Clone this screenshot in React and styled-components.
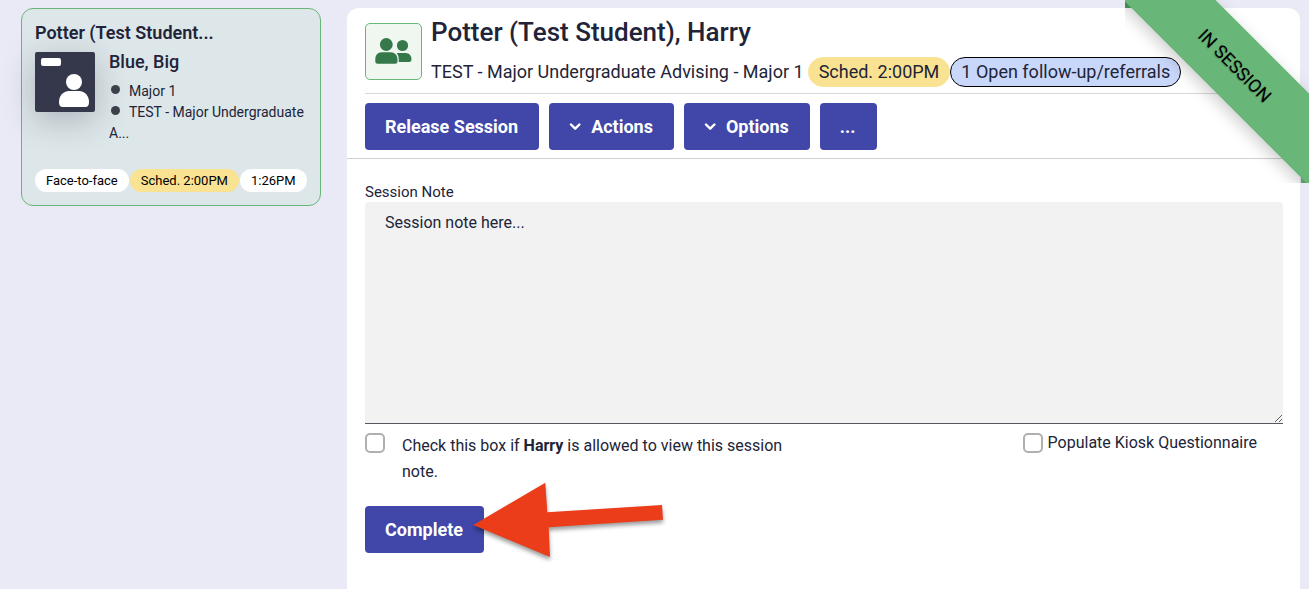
import React, { useState } from 'react';
import styled, { createGlobalStyle } from 'styled-components';

const theme = {
    text: '#212438',
    back: '#eaeaf6',
    primary: '#4047a8',
    green: '#69b778',
    greenDark: '#51a163',
    yellow: '#f9e292',
    line: '#d0d0d0',
};

const GlobalStyle = createGlobalStyle`
    * {
        box-sizing: border-box;
    }

    body {
        margin: 0;
        background-color: ${theme.back};
        color: ${theme.text};
        font-family: Roboto, "Liberation Sans", sans-serif;
        font-size: 16px;
    }

    h1, h2, h3, p, ul {
        margin: 0;
        padding: 0;
    }
`;

const Page = styled.div`
    position: relative;
    display: flex;
    align-items: stretch;
    gap: 26px;
    min-height: 100vh;
    padding: 8px 9px 0 21px;
    overflow: hidden;
`;

const Sidebar = styled.aside`
    flex: 0 0 300px;
`;

const Card = styled.article`
    padding: 12px 12px 13px 13px;
    border: 1px solid ${theme.green};
    border-radius: 12px;
    background-color: #dde6e9;
`;

const CardTitle = styled.h2`
    font-size: 18px;
    line-height: 24px;
    font-weight: 600;
`;

const CardBody = styled.div`
    display: flex;
    gap: 14px;
    padding-top: 7px;
`;

const Avatar = styled.svg`
    flex: none;
    width: 60px;
    height: 60px;
    border-radius: 2px;
    box-shadow: 0 8px 32px rgba(33, 36, 56, 0.25);
`;

const Advisor = styled.h3`
    font-size: 18px;
    line-height: 20px;
    font-weight: 500;
`;

const Reasons = styled.ul`
    height: 97px;
    padding-top: 9px;
    list-style: none;
    font-size: 14px;
    line-height: 21px;
`;

const Reason = styled.li`
    &::before {
        content: '';
        display: inline-block;
        width: 9px;
        height: 9px;
        margin: 0 9px 2px 2px;
        border-radius: 50%;
        background-color: #3d404b;
    }
`;

const Tags = styled.div`
    display: flex;
    gap: 1px;
`;

const Tag = styled.span`
    padding: 0 11px;
    border-radius: 12px;
    background-color: ${props => props.$color || '#fff'};
    color: #000;
    font-size: 13px;
    line-height: 23px;
    white-space: nowrap;
`;

const Main = styled.main`
    flex: 1;
    min-width: 0;
    border-radius: 12px 12px 0 0;
    background-color: #fff;
`;

const Header = styled.header`
    padding: 8px 18px;
    border-bottom: 1px solid ${theme.line};
`;

const Student = styled.div`
    display: flex;
    gap: 9px;
    padding-bottom: 6px;
    border-bottom: 1px solid #d8d8d8;
`;

const GroupBox = styled.div`
    flex: none;
    display: flex;
    align-items: center;
    justify-content: center;
    width: 57px;
    height: 57px;
    margin-top: 7px;
    padding-bottom: 2px;
    border: 1px solid ${theme.green};
    border-radius: 5px;
    background-color: #f0f7f1;
`;

const Name = styled.h1`
    font-size: 26px;
    line-height: 33px;
    font-weight: 500;
`;

const Detail = styled.div`
    display: flex;
    align-items: center;
    margin-top: 8px;
    font-size: 18px;
    line-height: 28px;
    white-space: nowrap;
`;

const Badge = styled.span`
    padding: 0 10px;
    border: 1px solid ${props => props.$border || props.$color};
    border-radius: 15px;
    background-color: ${props => props.$color};

    &:first-of-type {
        margin-left: 4px;
    }
`;

const Toolbar = styled.div`
    display: flex;
    gap: 10px;
    padding-top: 9px;
`;

const Button = styled.button`
    display: flex;
    align-items: center;
    height: 47px;
    padding: 0 21px 0 20px;
    border: 0;
    border-radius: 4px;
    background-color: ${theme.primary};
    color: #fff;
    font-family: inherit;
    font-size: 18px;
    font-weight: 700;
    cursor: pointer;

    svg {
        width: 12px;
        margin-right: 10px;
    }
`;

const Form = styled.form`
    padding: 23px 17px 24px 18px;
`;

const NoteLabel = styled.label`
    display: block;
    font-size: 15px;
    line-height: 20px;
`;

const Note = styled.textarea`
    display: block;
    width: 100%;
    height: 222px;
    padding: 10px 20px;
    border: 0;
    border-bottom: 1px solid #55575f;
    border-radius: 4px 4px 0 0;
    background-color: #f2f2f2;
    color: ${theme.text};
    font-family: inherit;
    font-size: 16px;
    line-height: 22px;
    resize: vertical;
    outline: none;
`;

const Checks = styled.div`
    display: flex;
    justify-content: space-between;
    align-items: flex-start;
    padding: 9px 26px 21px 0;
`;

const Check = styled.label`
    display: flex;
    align-items: flex-start;
    gap: ${props => props.$gap};
    max-width: 430px;
    line-height: ${props => props.$line};
`;

const CheckBox = styled.input.attrs({ type: 'checkbox' })`
    flex: none;
    appearance: none;
    width: 20px;
    height: 20px;
    margin: 0;
    border: 2px solid #b0b0b0;
    border-radius: 5px;
    background-color: #fff;

    &:checked {
        border-color: ${theme.primary};
        background-color: ${theme.primary};
    }
`;

const Submit = styled.div`
    position: relative;
    display: inline-block;
`;

const Arrow = styled.svg`
    position: absolute;
    left: 100px;
    top: -30px;
    width: 210px;
    height: 100px;
    filter: drop-shadow(0 3px 2px rgba(0, 0, 0, 0.4));
    pointer-events: none;
`;

const RibbonCorner = styled.div`
    position: absolute;
    top: 0;
    right: 0;
    width: 184px;
    height: 183px;
    overflow: hidden;
    pointer-events: none;

    &::before, &::after {
        content: '';
        position: absolute;
        width: 8px;
        height: 8px;
        background-color: ${theme.greenDark};
    }

    &::before {
        top: 0;
        left: 0;
    }

    &::after {
        right: 0;
        bottom: 0;
        background-color: ${theme.green};
    }
`;

const Ribbon = styled.span`
    position: absolute;
    z-index: 1;
    top: 33px;
    left: -40px;
    width: 300px;
    height: 65px;
    background-color: ${theme.green};
    box-shadow: 0 5px 16px rgba(0, 0, 0, 0.2);
    color: #000;
    font-size: 18px;
    line-height: 65px;
    text-align: center;
    text-shadow: 0 1px 1px rgba(0, 0, 0, 0.3);
    transform: rotate(45deg);
`;

const AvatarIcon = () => (
    <Avatar viewBox="0 0 60 60" aria-hidden="true">
        <rect width="60" height="60" fill="#35374a" />
        <rect x="6" y="6" width="20" height="8" rx="2" fill="#fff" />
        <circle cx="39" cy="30" r="8" fill="#fff" />
        <path d="M24 50c0-6 4-11 10-11h10c6 0 10 5 10 11 0 3-1 5-4 5H28c-3 0-4-2-4-5z" fill="#fff" />
    </Avatar>
);

const GroupIcon = () => (
    <svg width="37" height="28" viewBox="0 0 37 28" fill="#35794b" aria-hidden="true">
        <circle cx="11.3" cy="7.5" r="6.4" />
        <path d="M6.5 15.3h9.200c4 0 6.800 3 6.800 7v2c0 1.700-.8 2.500-2.500 2.500H2.800C1.100 26.800.3 26 .3 24.300v-2c0-4 2.400-7 6.200-7z" />
        <circle cx="27.500" cy="8.500" r="5.600" />
        <path d="M21.700 16h9c3.500 0 5.800 2.900 5.800 6.200 0 1.800-.8 2.800-2.500 2.800H23.700c.3-3.600 0-6.600-2-9z" />
    </svg>
);

const Chevron = () => (
    <svg viewBox="0 0 12 8" fill="none" stroke="#fff" strokeWidth="2.400" strokeLinecap="round" strokeLinejoin="round" aria-hidden="true">
        <path d="M2 1.500 6.200 5.700l4.200-4.200" />
    </svg>
);

const StudentCard = () => (
    <Sidebar>
        <Card>
            <CardTitle>Potter (Test Student...</CardTitle>
            <CardBody>
                <AvatarIcon />
                <div>
                    <Advisor>Blue, Big</Advisor>
                    <Reasons>
                        <Reason>Major 1</Reason>
                        <Reason>TEST - Major Undergraduate A...</Reason>
                    </Reasons>
                </div>
            </CardBody>
            <Tags>
                <Tag>Face-to-face</Tag>
                <Tag $color={theme.yellow}>Sched. 2:00PM</Tag>
                <Tag>1:26PM</Tag>
            </Tags>
        </Card>
    </Sidebar>
);

const SessionForm = () => {
    const [note, setNote] = useState('Session note here...');

    return (
        <Form onSubmit={e => { e.preventDefault(); }}>
            <NoteLabel htmlFor="note">Session Note</NoteLabel>
            <Note id="note" value={note} onChange={e => setNote(e.target.value)} />
            <Checks>
                <Check $gap="17px" $line="26px">
                    <CheckBox />
                    <span>Check this box if <b>Harry</b> is allowed to view this session note.</span>
                </Check>
                <Check $gap="5px" $line="20px">
                    <CheckBox />
                    <span>Populate Kiosk Questionnaire</span>
                </Check>
            </Checks>
            <Submit>
                <Button type="submit">Complete</Button>
                <Arrow viewBox="0 0 210 100" aria-hidden="true">
                    <path d="M8.300 49 80.300 6.700l2 29.600L197 29l1 14.700-114.300 7.600L85 81z" fill="#eb3d1a" />
                </Arrow>
            </Submit>
        </Form>
    );
};

const App = () => (
    <Page>
        <GlobalStyle />
        <StudentCard />
        <Main>
            <Header>
                <Student>
                    <GroupBox><GroupIcon /></GroupBox>
                    <div>
                        <Name>Potter (Test Student), Harry</Name>
                        <Detail>
                            TEST - Major Undergraduate Advising - Major 1
                            <Badge $color={theme.yellow}>Sched. 2:00PM</Badge>
                            <Badge $color="#c9d7fa" $border="#000">1 Open follow-up/referrals</Badge>
                        </Detail>
                    </div>
                </Student>
                <Toolbar>
                    <Button type="button">Release Session</Button>
                    <Button type="button"><Chevron />Actions</Button>
                    <Button type="button"><Chevron />Options</Button>
                    <Button type="button">...</Button>
                </Toolbar>
            </Header>
            <SessionForm />
        </Main>
        <RibbonCorner>
            <Ribbon>IN SESSION</Ribbon>
        </RibbonCorner>
    </Page>
);

export default App;
